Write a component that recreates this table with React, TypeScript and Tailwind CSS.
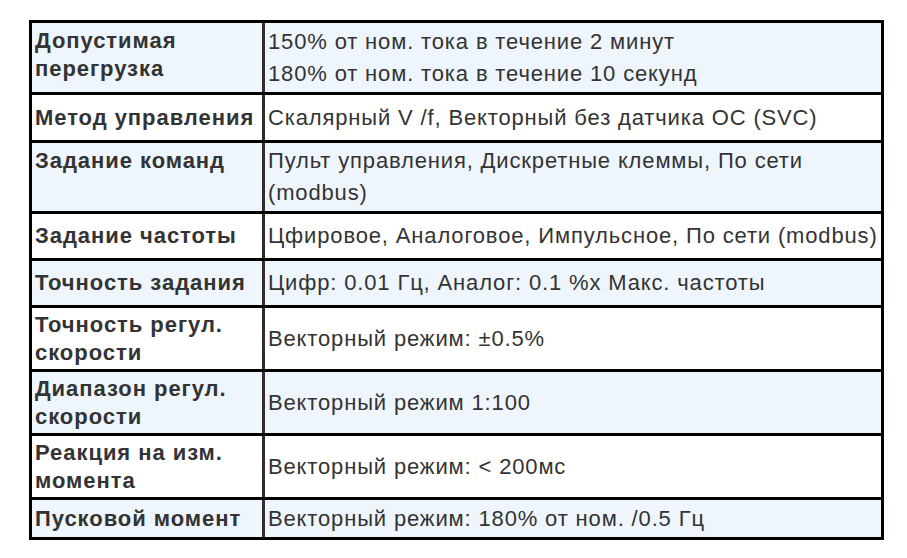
import React from "react";

type Row = {
  label: string[];
  value: string[];
  h: string;
  blue: boolean;
  labelTop?: boolean;
};

// heights include the 3px top border of each row after the first
const rows: Row[] = [
  {
    label: ["Допустимая", "перегрузка"],
    value: ["150% от ном. тока в течение 2 минут", "180% от ном. тока в течение 10 секунд"],
    h: "h-[69px]",
    blue: true,
    labelTop: true,
  },
  {
    label: ["Метод управления"],
    value: ["Скалярный V /f, Векторный без датчика ОС (SVC)"],
    h: "h-[48px]",
    blue: false,
  },
  {
    label: ["Задание команд"],
    value: ["Пульт управления, Дискретные клеммы, По сети", "(modbus)"],
    h: "h-[71px]",
    blue: true,
    labelTop: true,
  },
  {
    label: ["Задание частоты"],
    value: ["Цфировое, Аналоговое, Импульсное, По сети (modbus)"],
    h: "h-[47px]",
    blue: false,
  },
  {
    label: ["Точность задания"],
    value: ["Цифр: 0.01 Гц, Аналог: 0.1 %x Макс. частоты"],
    h: "h-[47px]",
    blue: true,
  },
  {
    label: ["Точность регул.", "скорости"],
    value: ["Векторный режим: ±0.5%"],
    h: "h-[64px]",
    blue: false,
  },
  {
    label: ["Диапазон регул.", "скорости"],
    value: ["Векторный режим 1:100"],
    h: "h-[64px]",
    blue: true,
  },
  {
    label: ["Реакция на изм.", "момента"],
    value: ["Векторный режим: < 200мс"],
    h: "h-[64px]",
    blue: false,
  },
  {
    label: ["Пусковой момент"],
    value: ["Векторный режим: 180% от ном. /0.5 Гц"],
    h: "h-[40px]",
    blue: true,
  },
];

export default function App() {
  return (
    <div className="w-[907px] h-[558px] bg-white pt-[20px] pl-[29px] font-['Liberation_Sans',Arial,sans-serif] text-[#333]">
      <div className="w-[855px] border-[3px] border-black">
        {rows.map((r, i) => (
          <div
            key={i}
            className={`flex ${r.h} ${i > 0 ? "border-t-[3px] border-black" : ""} ${
              r.blue ? "bg-[#eef5fc]" : "bg-white"
            }`}
          >
            <div
              className={`w-[233px] shrink-0 border-r-[3px] border-[#332c2c] pl-[3px] flex flex-col ${
                r.labelTop ? "justify-start pt-[4px]" : "justify-center"
              } text-[22px] tracking-[0.95px] font-bold leading-[28px]`}
            >
              {r.label.map((l) => (
                <span key={l} className="whitespace-nowrap">
                  {l}
                </span>
              ))}
            </div>
            <div className="flex-1 pl-[3px] flex flex-col justify-center text-[22px] tracking-[0.85px] leading-[32px]">
              {r.value.map((v) => (
                <span key={v} className="whitespace-nowrap">
                  {v}
                </span>
              ))}
            </div>
          </div>
        ))}
      </div>
    </div>
  );
}
